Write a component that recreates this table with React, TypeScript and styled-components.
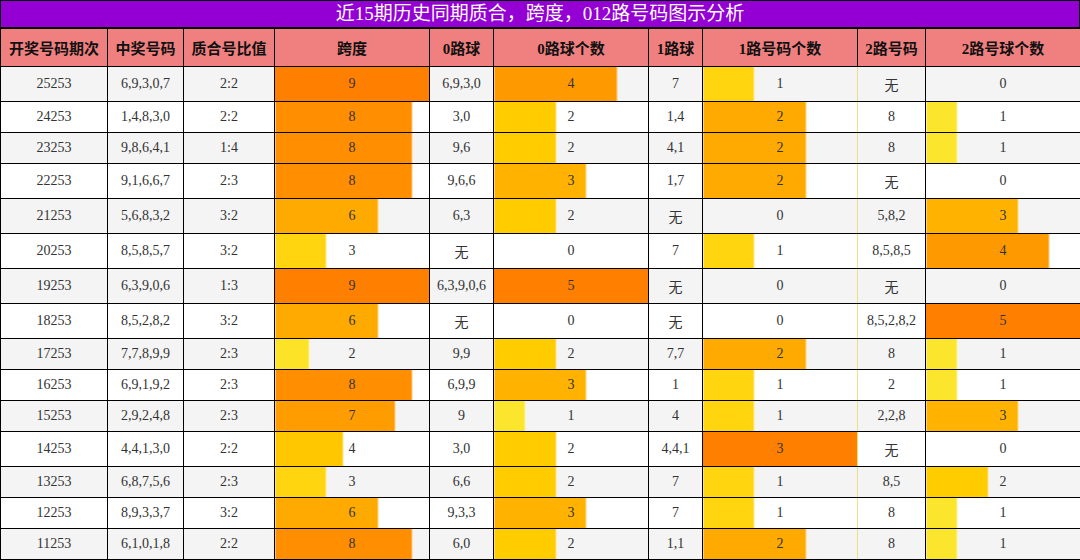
import React from "react";
import styled, { createGlobalStyle } from "styled-components";

const GlobalStyle = createGlobalStyle`
  html, body { margin: 0; padding: 0; background: #fff; }
  body { font-family: "Liberation Serif", "Noto Sans CJK SC", serif; }
`;

const Wrap = styled.div`
  width: 1080px;
`;

const Title = styled.div`
  box-sizing: border-box;
  width: 1080px;
  height: 29px;
  background: #9400d3;
  color: #fff;
  border: 1px solid #000;
  border-bottom: 2px solid #000;
  font-size: 19px;
  line-height: 26px;
  text-align: center;
  font-family: "Liberation Serif", "Noto Sans CJK SC", serif;
`;

const Table = styled.table`
  width: 1080px;
  table-layout: fixed;
  border-collapse: collapse;
  border-top: none;
`;

const HeadCell = styled.th`
  background: #f08080;
  color: #111;
  font-weight: bold;
  font-size: 15px;
  padding: 8px 0;
  border: 1px solid #000;
  border-top: none;
  text-align: center;
  white-space: nowrap;
`;

const Row = styled.tr<{ $alt: boolean }>`
  background: ${(p) => (p.$alt ? "#f4f4f4" : "#ffffff")};
`;

const Cell = styled.td<{ $softRight?: boolean }>`
  font-size: 14px;
  color: #333;
  padding: 7px 0;
  border: 1px solid #000;
  ${(p) => (p.$softRight ? "border-right: 1px solid #f3dc86;" : "")}
  text-align: center;
  white-space: nowrap;
`;

const BarCell = styled(Cell)`
  color: #333;
`;

type RowData = {
  issue: string;
  nums: string;
  ratio: string;
  span: number;
  r0: string;
  c0: number;
  r1: string;
  c1: number;
  r2: string;
  c2: number;
};

const rows: RowData[] = [
  { issue: "25253", nums: "6,9,3,0,7", ratio: "2:2", span: 9, r0: "6,9,3,0", c0: 4, r1: "7", c1: 1, r2: "无", c2: 0 },
  { issue: "24253", nums: "1,4,8,3,0", ratio: "2:2", span: 8, r0: "3,0", c0: 2, r1: "1,4", c1: 2, r2: "8", c2: 1 },
  { issue: "23253", nums: "9,8,6,4,1", ratio: "1:4", span: 8, r0: "9,6", c0: 2, r1: "4,1", c1: 2, r2: "8", c2: 1 },
  { issue: "22253", nums: "9,1,6,6,7", ratio: "2:3", span: 8, r0: "9,6,6", c0: 3, r1: "1,7", c1: 2, r2: "无", c2: 0 },
  { issue: "21253", nums: "5,6,8,3,2", ratio: "3:2", span: 6, r0: "6,3", c0: 2, r1: "无", c1: 0, r2: "5,8,2", c2: 3 },
  { issue: "20253", nums: "8,5,8,5,7", ratio: "3:2", span: 3, r0: "无", c0: 0, r1: "7", c1: 1, r2: "8,5,8,5", c2: 4 },
  { issue: "19253", nums: "6,3,9,0,6", ratio: "1:3", span: 9, r0: "6,3,9,0,6", c0: 5, r1: "无", c1: 0, r2: "无", c2: 0 },
  { issue: "18253", nums: "8,5,2,8,2", ratio: "3:2", span: 6, r0: "无", c0: 0, r1: "无", c1: 0, r2: "8,5,2,8,2", c2: 5 },
  { issue: "17253", nums: "7,7,8,9,9", ratio: "2:3", span: 2, r0: "9,9", c0: 2, r1: "7,7", c1: 2, r2: "8", c2: 1 },
  { issue: "16253", nums: "6,9,1,9,2", ratio: "2:3", span: 8, r0: "6,9,9", c0: 3, r1: "1", c1: 1, r2: "2", c2: 1 },
  { issue: "15253", nums: "2,9,2,4,8", ratio: "2:3", span: 7, r0: "9", c0: 1, r1: "4", c1: 1, r2: "2,2,8", c2: 3 },
  { issue: "14253", nums: "4,4,1,3,0", ratio: "2:2", span: 4, r0: "3,0", c0: 2, r1: "4,4,1", c1: 3, r2: "无", c2: 0 },
  { issue: "13253", nums: "6,8,7,5,6", ratio: "2:3", span: 3, r0: "6,6", c0: 2, r1: "7", c1: 1, r2: "8,5", c2: 2 },
  { issue: "12253", nums: "8,9,3,3,7", ratio: "3:2", span: 6, r0: "9,3,3", c0: 3, r1: "7", c1: 1, r2: "8", c2: 1 },
  { issue: "11253", nums: "6,1,0,1,8", ratio: "2:2", span: 8, r0: "6,0", c0: 2, r1: "1,1", c1: 2, r2: "8", c2: 1 },
];

const colWidths = [107, 76, 91, 155, 64, 155, 54, 155, 68, 155];
const headers = [
  "开奖号码期次",
  "中奖号码",
  "质合号比值",
  "跨度",
  "0路球",
  "0路球个数",
  "1路球",
  "1路号码个数",
  "2路号码",
  "2路号球个数",
];

function barColor(p: number): [number, number, number] {
  const r = Math.min(255, Math.round(245 + 30 * p));
  const g = Math.round(255 - 127 * p);
  const b = Math.max(0, Math.round(225 * (0.4 - p)));
  return [r, g, b];
}

function barBackground(value: number, max: number): string | undefined {
  if (value <= 0) return undefined;
  const p = value / max;
  const [r, g, b] = barColor(p);
  const c = `rgb(${r},${g},${b})`;
  const e = `rgb(${Math.round((r + 255) / 2)},${Math.round((g + 255) / 2)},${Math.round((b + 255) / 2)})`;
  const w = (p * 100).toFixed(3);
  if (p >= 1) return `linear-gradient(to right, ${c}, ${c})`;
  return `linear-gradient(to right, ${c} 0, ${c} calc(${w}% - 1px), ${e} calc(${w}% - 1px), ${e} ${w}%, transparent ${w}%)`;
}

const Bar: React.FC<{ value: number; max: number; softRight?: boolean }> = ({ value, max, softRight }) => (
  <BarCell $softRight={softRight} style={{ background: barBackground(value, max) }}>
    {value}
  </BarCell>
);

export default function App() {
  const maxSpan = Math.max(...rows.map((r) => r.span));
  const max0 = Math.max(...rows.map((r) => r.c0));
  const max1 = Math.max(...rows.map((r) => r.c1));
  const max2 = Math.max(...rows.map((r) => r.c2));
  return (
    <Wrap>
      <GlobalStyle />
      <Title>近15期历史同期质合，跨度，012路号码图示分析</Title>
      <Table>
        <colgroup>
          {colWidths.map((w, i) => (
            <col key={i} style={{ width: w }} />
          ))}
        </colgroup>
        <thead>
          <tr>
            {headers.map((h) => (
              <HeadCell key={h}>{h}</HeadCell>
            ))}
          </tr>
        </thead>
        <tbody>
          {rows.map((r, i) => (
            <Row key={r.issue} $alt={i % 2 === 0}>
              <Cell>{r.issue}</Cell>
              <Cell>{r.nums}</Cell>
              <Cell>{r.ratio}</Cell>
              <Bar value={r.span} max={maxSpan} />
              <Cell>{r.r0}</Cell>
              <Bar value={r.c0} max={max0} />
              <Cell>{r.r1}</Cell>
              <Bar value={r.c1} max={max1} softRight />
              <Cell>{r.r2}</Cell>
              <Bar value={r.c2} max={max2} />
            </Row>
          ))}
        </tbody>
      </Table>
    </Wrap>
  );
}
